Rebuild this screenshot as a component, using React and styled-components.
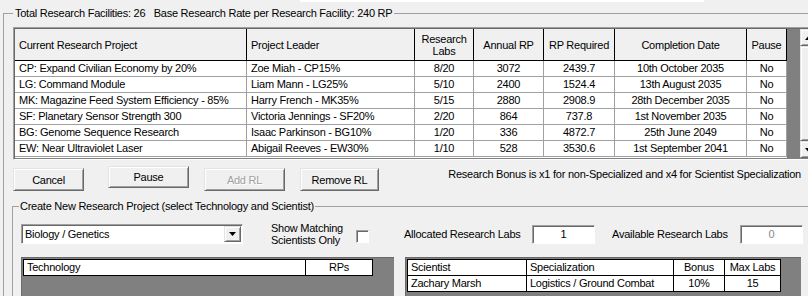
import React from 'react';
import styled, { createGlobalStyle, css } from 'styled-components';

const GlobalStyle = createGlobalStyle`
  html, body { margin: 0; padding: 0; background: #f0f0f0; }
  body {
    font-family: "Liberation Sans", Arial, sans-serif;
    font-size: 11px;
    letter-spacing: -0.25px;
    color: #000;
  }
  #root { width: 808px; height: 296px; overflow: hidden; }
`;

const raised = css`
  box-sizing: border-box;
  background: #f0f0f0;
  border: 1px solid;
  border-color: #e3e3e3 #696969 #696969 #e3e3e3;
  box-shadow: inset 1px 1px 0 #fff, inset -1px -1px 0 #a0a0a0;
`;

const sunken = css`
  box-sizing: border-box;
  border: 1px solid;
  border-color: #a0a0a0 #fff #fff #a0a0a0;
  box-shadow: inset 1px 1px 0 #696969;
`;

const Window = styled.div`
  width: 808px;
  height: 296px;
  overflow: hidden;
  background: #f0f0f0;
`;

const TopStrip = styled.div`
  margin-left: 300px;
  width: 404px;
  height: 2px;
  background: #fff;
`;

const Group = styled.fieldset`
  box-sizing: border-box;
  min-width: 0;
  width: ${p => p.$w}px;
  margin: ${p => p.$mt}px 0 0 ${p => p.$ml}px;
  padding: ${p => p.$pt}px 0 0 ${p => p.$pl}px;
  border: 1px solid #a0a0a0;
`;

const Legend = styled.legend`
  padding: 0 ${p => p.$pad}px;
  margin-left: ${p => p.$ml || 0}px;
  line-height: 13px;
  font-size: 11px;
  white-space: pre;
`;

const GridFrame = styled.div`
  ${sunken};
  display: flex;
  width: 805px;
  height: 133px;
  padding: 1px 0 0 1px;
  background: #808080;
`;

const Table = styled.div`
  display: grid;
  grid-template-columns: 232px 168px 59px 70px 71px 132px 40px;
  grid-auto-rows: 16px;
  grid-template-rows: 32px;
  width: 772px;
  height: 129px;
  overflow: hidden;
  background: #fff;
`;

const HeadCell = styled.div`
  box-sizing: border-box;
  display: flex;
  align-items: center;
  justify-content: ${p => (p.$left ? 'flex-start' : 'center')};
  padding: 0 ${p => (p.$left ? '4px' : '0')};
  background: #f0f0f0;
  border-right: 1px solid #000;
  border-bottom: 1px solid #000;
  line-height: 12px;
  text-align: center;
`;

const Cell = styled.div`
  box-sizing: border-box;
  padding: 0 ${p => (p.$left ? '4px' : '0')};
  text-align: ${p => (p.$left ? 'left' : 'center')};
  line-height: 15px;
  white-space: nowrap;
  border-right: 1px solid #a0a0a0;
  border-bottom: 1px solid #a0a0a0;
`;

const ScrollBar = styled.div`
  display: flex;
  flex-direction: column;
  width: 17px;
  height: 129px;
  margin-left: auto;
  background: #f0f0f0;
`;

const ScrollBtn = styled.div`
  ${raised};
  display: flex;
  align-items: center;
  justify-content: center;
  height: 17px;
`;

const ScrollThumb = styled.div`
  ${raised};
  flex: 1;
`;

const ButtonRow = styled.div`
  display: flex;
  align-items: flex-start;
  width: 788px;
  margin-top: 6px;
`;

const PushButton = styled.div`
  ${raised};
  display: flex;
  align-items: center;
  justify-content: center;
  width: ${p => p.$w}px;
  height: ${p => p.$h}px;
  margin-left: ${p => p.$ml}px;
  margin-top: ${p => p.$mt}px;
  color: ${p => (p.$disabled ? '#a0a0a0' : '#000')};
  text-shadow: ${p => (p.$disabled ? '1px 1px 0 #fff' : 'none')};
`;

const Note = styled.div`
  margin-left: auto;
  margin-top: 2px;
  line-height: 13px;
  white-space: nowrap;
`;

const FormRow = styled.div`
  display: flex;
  align-items: center;
  height: 20px;
`;

const Combo = styled.div`
  ${sunken};
  display: flex;
  align-items: center;
  width: 222px;
  height: 20px;
  padding: 1px 1px 1px 3px;
  background: #fff;
`;

const DropButton = styled.div`
  ${raised};
  display: flex;
  align-items: center;
  justify-content: center;
  width: 17px;
  height: 16px;
  margin-left: auto;
`;

const CheckLabel = styled.div`
  width: 85px;
  margin-left: 28px;
  line-height: 12px;
`;

const CheckBox = styled.div`
  ${sunken};
  width: 13px;
  height: 13px;
  margin-top: 4px;
  background: #fff;
`;

const FieldLabel = styled.div`
  width: ${p => p.$w}px;
  margin-left: ${p => p.$ml}px;
  white-space: nowrap;
`;

const TextBox = styled.div`
  ${sunken};
  width: 63px;
  height: 19px;
  line-height: 17px;
  text-align: center;
  background: #fff;
  color: ${p => (p.$disabled ? '#8a8a8a' : '#000')};
`;

const ListRow = styled.div`
  display: flex;
  gap: 11px;
  margin-top: 13px;
`;

const ListPanel = styled.div`
  box-sizing: border-box;
  width: ${p => p.$w}px;
  height: 60px;
  padding: 1px;
  background: #808080;
  border-top: 1px solid #6a6a6a;
  border-left: 1px solid #6a6a6a;
`;

const ListTable = styled.div`
  display: grid;
  grid-template-columns: ${p => p.$cols};
  grid-auto-rows: 16px;
  width: max-content;
  border-top: 1px solid #000;
  border-left: 1px solid #000;
`;

const ListCell = styled.div`
  box-sizing: border-box;
  padding: 0 3px;
  line-height: 15px;
  white-space: nowrap;
  text-align: ${p => (p.$center ? 'center' : 'left')};
  background: #fff;
  border-right: 1px solid #000;
  border-bottom: 1px solid #000;
`;

const Arrow = ({ down }) => (
  <svg width="7" height="4" viewBox="0 0 7 4">
    <path d={down ? 'M0 0h7L3.5 4z' : 'M0 4h7L3.5 0z'} fill="#000" />
  </svg>
);

const projects = [
  ['CP: Expand Civilian Economy by 20%', 'Zoe Miah - CP15%', '8/20', '3072', '2439.7', '10th October 2035', 'No'],
  ['LG: Command Module', 'Liam Mann - LG25%', '5/10', '2400', '1524.4', '13th August 2035', 'No'],
  ['MK: Magazine Feed System Efficiency - 85%', 'Harry French - MK35%', '5/15', '2880', '2908.9', '28th December 2035', 'No'],
  ['SF: Planetary Sensor Strength 300', 'Victoria Jennings - SF20%', '2/20', '864', '737.8', '1st November 2035', 'No'],
  ['BG: Genome Sequence Research', 'Isaac Parkinson - BG10%', '1/20', '336', '4872.7', '25th June 2049', 'No'],
  ['EW: Near Ultraviolet Laser', 'Abigail Reeves - EW30%', '1/10', '528', '3530.6', '1st September 2041', 'No'],
];

export default function App() {
  return (
    <Window>
      <GlobalStyle />
      <TopStrip />
      <Group $w={840} $mt={5} $ml={3} $pt={7} $pl={9}>
        <Legend $pad={2}>
          {'Total Research Facilities: 26   Base Research Rate per Research Facility: 240 RP'}
        </Legend>

        <GridFrame>
          <Table>
            <HeadCell $left>Current Research Project</HeadCell>
            <HeadCell $left>Project Leader</HeadCell>
            <HeadCell>Research<br />Labs</HeadCell>
            <HeadCell>Annual RP</HeadCell>
            <HeadCell>RP Required</HeadCell>
            <HeadCell>Completion Date</HeadCell>
            <HeadCell>Pause</HeadCell>
            {projects.map(row =>
              row.map((v, i) => (
                <Cell key={row[0] + i} $left={i < 2}>{v}</Cell>
              ))
            )}
          </Table>
          <ScrollBar>
            <ScrollBtn><Arrow /></ScrollBtn>
            <ScrollThumb />
            <ScrollBtn><Arrow down /></ScrollBtn>
          </ScrollBar>
        </GridFrame>

        <ButtonRow>
          <PushButton $w={71} $h={23} $ml={0} $mt={2}>Cancel</PushButton>
          <PushButton $w={81} $h={22} $ml={24} $mt={0}>Pause</PushButton>
          <PushButton $w={81} $h={23} $ml={15} $mt={2} $disabled>Add RL</PushButton>
          <PushButton $w={79} $h={23} $ml={15} $mt={2}>Remove RL</PushButton>
          <Note>Research Bonus is x1 for non-Specialized and x4 for Scientist Specialization</Note>
        </ButtonRow>

        <Group $w={820} $mt={9} $ml={-1} $pt={11} $pl={8}>
          <Legend $pad={1} $ml={-2}>Create New Research Project (select Technology and Scientist)</Legend>

          <FormRow>
            <Combo>
              Biology / Genetics
              <DropButton><Arrow down /></DropButton>
            </Combo>
            <CheckLabel>Show Matching<br />Scientists Only</CheckLabel>
            <CheckBox />
            <FieldLabel $w={128} $ml={35}>Allocated Research Labs</FieldLabel>
            <TextBox>1</TextBox>
            <FieldLabel $w={128} $ml={17}>Available Research Labs</FieldLabel>
            <TextBox $disabled>0</TextBox>
          </FormRow>

          <ListRow>
            <ListPanel $w={373}>
              <ListTable $cols="282px 67px">
                <ListCell>Technology</ListCell>
                <ListCell $center>RPs</ListCell>
              </ListTable>
            </ListPanel>
            <ListPanel $w={396}>
              <ListTable $cols="119px 147px 51px 56px">
                <ListCell>Scientist</ListCell>
                <ListCell>Specialization</ListCell>
                <ListCell $center>Bonus</ListCell>
                <ListCell $center>Max Labs</ListCell>
                <ListCell>Zachary Marsh</ListCell>
                <ListCell>Logistics / Ground Combat</ListCell>
                <ListCell $center>10%</ListCell>
                <ListCell $center>15</ListCell>
              </ListTable>
            </ListPanel>
          </ListRow>
        </Group>
      </Group>
    </Window>
  );
}
